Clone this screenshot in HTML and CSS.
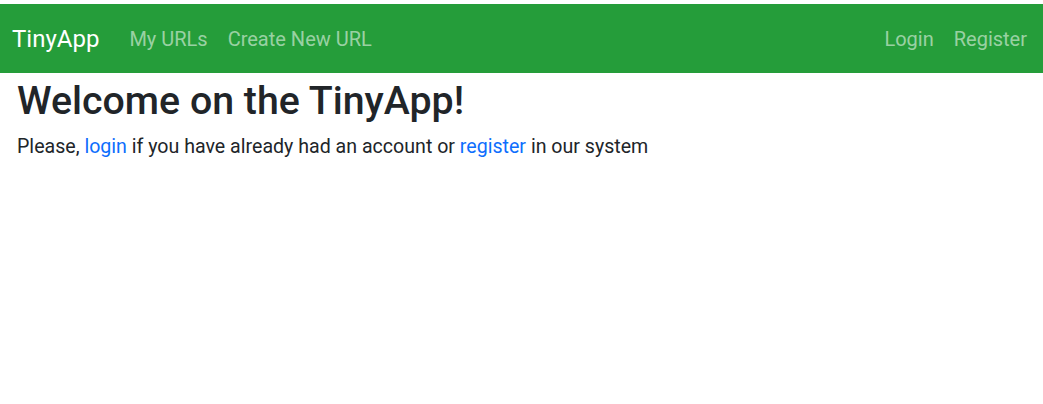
FILE: index.html
```html
<!DOCTYPE html>
<html>
<head>
<meta charset="utf-8">
<link rel="stylesheet" href="styles.css">
</head>
<body>
<nav class="navbar">
  <a class="brand" href="#">TinyApp</a>
  <div class="nav-links">
    <a href="#">My URLs</a>
    <a href="#">Create New URL</a>
  </div>
  <div class="nav-right">
    <a href="#">Login</a>
    <a href="#">Register</a>
  </div>
</nav>
<main class="content">
  <h1>Welcome on the TinyApp!</h1>
  <p>Please, <a href="#">login</a> if you have already had an account or <a href="#">register</a> in our system</p>
</main>
</body>
</html>
```
FILE: styles.css
```css
html, body {
  margin: 0;
  padding: 0;
  background: #fff;
}
body {
  padding-top: 4px;
  font-family: Roboto, "Liberation Sans", Arial, sans-serif;
  color: #212529;
}
.navbar {
  background: #259d3a;
  height: 69px;
  display: flex;
  align-items: center;
  padding: 0 16px 0 12px;
}
.navbar a {
  text-decoration: none;
}
.brand {
  color: #fff;
  font-size: 24px;
  margin-right: 30px;
}
.nav-links, .nav-right {
  display: flex;
  gap: 20px;
}
.nav-links a, .nav-right a {
  color: rgba(255,255,255,0.55);
  font-size: 20px;
}
.nav-right {
  margin-left: auto;
  gap: 20px;
}
.content {
  padding: 0 17px;
}
h1 {
  font-size: 39.3px;
  font-weight: 500;
  margin: 5px 0 10px;
  line-height: 1.2;
}
p {
  font-size: 19.6px;
  margin: 0;
}
p a {
  color: #0d6efd;
  text-decoration: none;
}
```
